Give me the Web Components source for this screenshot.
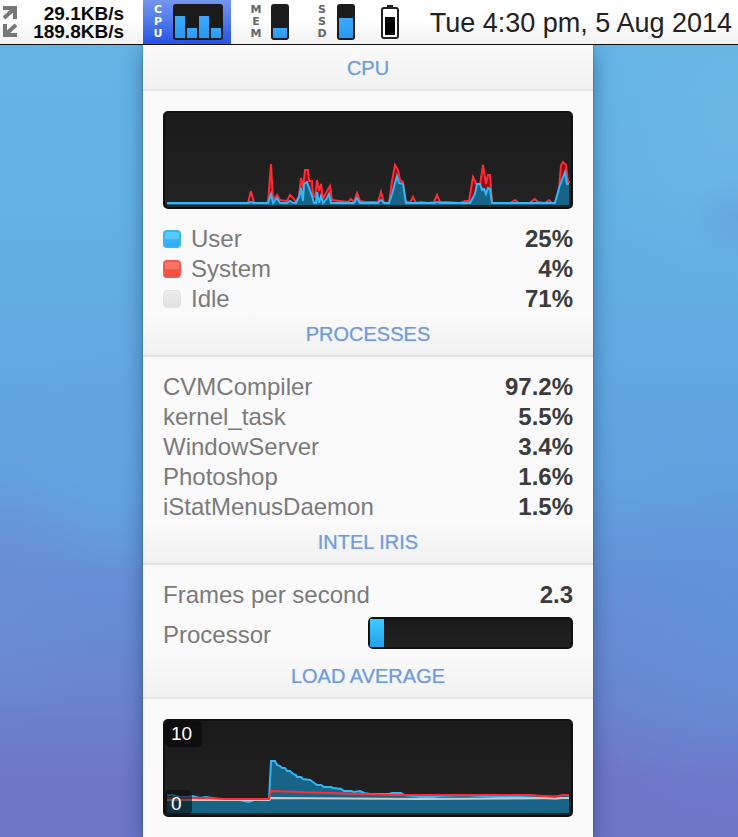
<!DOCTYPE html>
<html lang="en">
<head>
<meta charset="utf-8">
<title>System monitor</title>
<style>
html { min-height: 100%; }
body {
  margin: 0; min-height: 100vh; display: flex; flex-direction: column;
  font-family: "Liberation Sans", Arial, sans-serif; color: #7a7a7a;
  background:
    radial-gradient(ellipse 130px 120px at 18% 54%, #66a5e2aa, #66a5e200),
    radial-gradient(ellipse 110px 150px at 0% 70%, #6c8ed6aa, #6c8ed600),
    radial-gradient(ellipse 180px 200px at 100% 74%, #6096daaa, #6096da00),
    radial-gradient(ellipse 160px 180px at 100% 14%, #72b9e299, #72b9e200),
    radial-gradient(ellipse 50px 40px at 100% 26%, #5c94dc88, #5c94dc00),
    linear-gradient(#64b5e5 0%, #64b2e4 22%, #61a9e2 45%, #61a2df 58%, #668fd6 70%, #6a83ce 84%, #6f76c8 93%, #6e76c8 100%);
}
</style>
</head>
<body>
<desktop-view></desktop-view>
<script>
const define = (name, html, setup) => customElements.define(name, class extends HTMLElement {
  connectedCallback() {
    if (this.shadowRoot) return;
    this.attachShadow({ mode: 'open' }).innerHTML = typeof html === 'function' ? html(this) : html;
    if (setup) setup(this);
  }
});

define('net-speed', `
<style>
:host { display: flex; align-items: center; justify-content: space-between; box-sizing: border-box; width: 143px; height: 44px; padding: 0 19px 0 3px; }
.rates { font-weight: bold; font-size: 19px; line-height: 18px; padding-top: 2px; color: #0b0b0b; text-align: right; }
svg { width: 14px; height: 34px; flex: none; }
</style>
<svg viewBox="0 0 14 34" fill="none" stroke="#777" stroke-width="4" aria-hidden="true">
  <path d="M0 3H12V14M11 4L1 13"/><path d="M2 19V30H14M3 29L13 20"/>
</svg>
<div class="rates"><div>29.1KB/s</div><div>189.8KB/s</div></div>`);

define('menu-meter', el => {
  const bars = el.getAttribute('bars').split(' ').map(h => `<i style="height:${h}px"></i>`).join('');
  const letters = [...el.getAttribute('label')].map(c => `<span>${c}</span>`).join('');
  return `
<style>
:host { display: block; }
button { all: unset; display: flex; align-items: center; gap: 8px; height: 44px; padding: 0 8px; box-sizing: border-box; color: #666; }
:host([active]) button { color: #fff; background: linear-gradient(#7596ee, #4e77ea 50%, #2454e6); }
.label { display: flex; flex-direction: column; align-items: center; width: 14px; font: bold 11px/12px "DejaVu Sans", sans-serif; }
.meter { display: flex; align-items: flex-end; gap: 2px; box-sizing: border-box; height: 36px; padding: 2px; border-radius: 3px; background: #1b1b1b; }
:host([active]) .meter { min-width: 50px; }
i { display: block; width: 14px; background: linear-gradient(#3ba9fa, #2997ee); }
:host([active]) i { width: 10px; }
</style>
<button aria-label="${el.getAttribute('label')} usage"><span class="label">${letters}</span><span class="meter">${bars}</span></button>`;
});

define('battery-icon', `
<style>:host { display: block; } svg { display: block; width: 18px; height: 34px; }</style>
<svg viewBox="0 0 18 34" role="img" aria-label="Battery">
  <path d="M6 0h6v3H6z" fill="#222"/>
  <rect x="1" y="3" width="16" height="30" rx="2" fill="#fff" stroke="#222" stroke-width="2"/>
  <rect x="4" y="12" width="10" height="18" fill="#000"/>
</svg>`);

define('menu-bar', `
<style>
:host { display: flex; align-items: center; height: 44px; background: linear-gradient(#fff 40%, #f2f2f2); border-bottom: 1px solid #111; }
.group { display: flex; align-items: center; gap: 10px; padding: 0 10px; flex: none; }
battery-icon { padding: 0 8px; }
time { margin-left: auto; padding: 2px 6px 0 0; font-size: 27px; line-height: 30px; color: #222; white-space: nowrap; }
</style>
<net-speed></net-speed>
<menu-meter active label="CPU" bars="22 10 22 10"></menu-meter>
<div class="group">
  <menu-meter label="MEM" bars="10"></menu-meter>
  <menu-meter label="SSD" bars="20"></menu-meter>
  <battery-icon></battery-icon>
</div>
<time datetime="2014-08-05T16:30">Tue 4:30 pm, 5 Aug 2014</time>`);

define('section-title', `
<style>
:host { display: block; background: linear-gradient(#fafafa, #f1f1f1); border-bottom: 2px solid #e4e4e4; padding: 8px 20px 9px; }
:host([first]) { padding: 11px 20px 9px; }
h2 { margin: 0; font-size: 20px; font-weight: normal; line-height: 24px; height: 24px; text-align: center; color: #729bdc; text-shadow: 0 0 1px #729bdc88; }
</style>
<h2><slot></slot></h2>`);

define('stat-row', el => `
<style>
:host { display: flex; align-items: center; height: 30px; font-size: 24px; line-height: 30px; }
.name { flex: 1; }
.swatch { width: 18px; height: 18px; border-radius: 4px; margin-right: 10px; box-sizing: border-box; }
.user { background: linear-gradient(#58c9fd 50%, #39b5f8 50%, #2faaf0); border: 2px solid #37b4f5; }
.system { background: linear-gradient(#fb7567 50%, #f8584a 50%, #ef4d40); border: 2px solid #f25a4b; }
.idle { background: linear-gradient(#ececec, #e2e2e2); border: 1px solid #e2e2e2; }
b { color: #3c3c3c; }
</style>
${el.hasAttribute('swatch') ? `<span class="swatch ${el.getAttribute('swatch')}"></span>` : ''}
<span class="name"><slot></slot></span><b>${el.getAttribute('value')}</b>`);

define('usage-bar', `
<style>
:host { display: flex; align-items: center; height: 46px; font-size: 24px; line-height: 30px; }
span { flex: 1; padding-top: 3px; }
.track { width: 50%; box-sizing: border-box; height: 32px; border: 2px solid #111; border-radius: 5px; background: linear-gradient(#1a1a1a, #222); }
.fill { width: 7%; height: 28px; background: linear-gradient(#3bcbff, #299fec); }
</style>
<span><slot></slot></span>
<div class="track" role="meter" aria-label="Processor" aria-valuenow="7" aria-valuemin="0" aria-valuemax="100"><div class="fill"></div></div>`);

define('history-graph', `
<style>
:host { display: grid; height: 94px; border: 2px solid #111; border-radius: 5px; background: linear-gradient(#1a1a1a, #232323); position: relative; overflow: hidden; }
::slotted(svg) { display: block; width: 100%; height: 94px; }
::slotted(span) { position: absolute; left: 0; padding: 0 10px 0 6px; background: #0b0b0bcc; border-radius: 5px; color: #fff; font-size: 19px; line-height: 26px; }
::slotted(.max) { top: 0; }
::slotted(.min) { bottom: 0; padding-top: 3px; line-height: 22px; background: #0b0b0b99; }
</style>
<slot></slot>`);

define('cpu-panel', `
<style>
:host { display: block; flex: 1; margin: 0 145px 0 143px; background: #fafafa; box-shadow: 0 6px 20px #10306077, 0 0 2px #10306066; }
.body { padding: 20px 20px 0; }
.list { padding: 15px 20px 0; }
.legend { padding-top: 15px; }
svg path { vector-effect: non-scaling-stroke; }
.last { padding-bottom: 20px; }
</style>
<section-title first>CPU</section-title>
<div class="body">
  <history-graph>
    <svg viewBox="165 113 406 94" preserveAspectRatio="none" fill="none" stroke-width="2" role="img" aria-label="CPU history">
      <path fill="#8c1018" d="M268 203L271 164L273 203ZM299 203V196L301 178L303 188L305 170H308L309 181H312L313 203L315 203L317 180L319 191L321 184L323 203L330 186L332 203ZM389 203L392 181L395 165L398 170L400 180L403 182L405 203ZM469 203L473 177L477 185H480L483 165L486 184L488 175H490L492 203ZM556 203L559 190L561 165L563 162L566 165L568 182H569V203Z"/>
      <path stroke="#ff2b36" d="M167 203H248L251 191L254 203H268L271 164L273 200L277 195L280 200L287 201L290 195L293 198L296 202L299 196L301 178L303 188L305 170H308L309 181H312L313 196L315 197L317 180L319 191L321 184L323 199L327 191L330 186L332 200L340 201L348 202L351 199L354 202L357 193L360 201L366 202H378L381 192L384 203H389L392 181L395 165L398 170L400 180L403 182L405 201L410 203L413 197L416 203L421 202L428 203L434 202L437 195L440 202L447 202L460 203L465 201H469L473 177L477 185H480L483 165L486 184L488 175H490L492 203H510L515 200L519 203H529L535 199L538 202L545 203L549 200L552 203H555L559 190L561 165L563 162L566 165L568 182H570"/>
      <path fill="#176486" d="M167 203H268L271 194L273 203L277 198L280 203H296L299 197L301 188L303 201L304 184L307 182L312 196L314 203L316 203L317 192L319 203L321 196L323 203L327 198L329 194L331 203H354L357 198L360 203H389L392 194L397 176L399 183L403 184L406 203H470L475 194L477 184H480L482 190L484 189L486 194L488 188L490 189L492 203H555L559 188L565 172L567 184H569V205H167Z"/>
      <path stroke="#32b7fa" d="M167 203H248L251 202L254 203H268L271 194L273 203L277 198L280 203H287L290 201L293 203H296L299 197L301 188L303 201L304 184L307 182L312 196L314 203H316L317 192L319 203L321 196L323 203L327 198L329 194L331 203H354L357 198L360 203H378L381 200L384 203H389L392 194L397 176L399 183L403 184L406 203H434L437 202L440 203H470L475 194L477 184H480L482 190L484 189L486 194L488 188L490 189L492 203H555L559 188L565 172L567 184H569"/>
    </svg>
  </history-graph>
  <div class="legend">
    <stat-row swatch="user" value="25%">User</stat-row>
    <stat-row swatch="system" value="4%">System</stat-row>
    <stat-row swatch="idle" value="71%">Idle</stat-row>
  </div>
</div>
<section-title>PROCESSES</section-title>
<div class="list">
  <stat-row value="97.2%">CVMCompiler</stat-row>
  <stat-row value="5.5%">kernel_task</stat-row>
  <stat-row value="3.4%">WindowServer</stat-row>
  <stat-row value="1.6%">Photoshop</stat-row>
  <stat-row value="1.5%">iStatMenusDaemon</stat-row>
</div>
<section-title>INTEL IRIS</section-title>
<div class="list">
  <stat-row value="2.3">Frames per second</stat-row>
  <usage-bar>Processor</usage-bar>
</div>
<section-title>LOAD AVERAGE</section-title>
<div class="body last">
  <history-graph>
    <svg viewBox="165 721 406 94" preserveAspectRatio="none" fill="none" stroke-width="2" role="img" aria-label="Load average history">
      <path fill="#176486" d="M167 796L190 797L208 797L218 799H240L250 802L269 800L271 761H275L278 765L282 768H285L288 771L294 774L298 777H302L306 780L312 782L318 786L325 787H331L336 789L344 791H351L355 793L362 791L367 794H380L392 793H402L410 795H569V813H167Z"/>
      <path stroke="#32b7fa" d="M167 795H173L180 797H188L192 796L200 798L206 797L218 799L240 800L248 802L255 800H269L271 761H275L277 765L280 766L282 768H285L287 771H290L293 774L296 775L297 777H301L303 779L310 780L313 782L317 785H321L324 787H331L333 788L341 789L344 791H351L354 792L360 791L364 793L370 794L380 794L389 794L392 793H401L404 795L420 797H433L440 796L465 795L480 796L500 797H520L545 798L556 799L562 798H569"/>
      <path stroke="#c9c9c9" d="M167 800H269L271 798L420 799L569 798"/>
      <path stroke="#ff2b36" d="M167 798H205L225 799H269L271 791L330 793L390 795H500L530 795L555 797L562 795H569"/>
    </svg>
    <span class="max">10</span>
    <span class="min">0</span>
  </history-graph>
</div>`);

define('desktop-view', `
<style>:host { display: flex; flex-direction: column; flex: 1; }
menu-bar { position: relative; z-index: 1; }</style>
<menu-bar></menu-bar><cpu-panel></cpu-panel>`);
</script>
</body>
</html>
